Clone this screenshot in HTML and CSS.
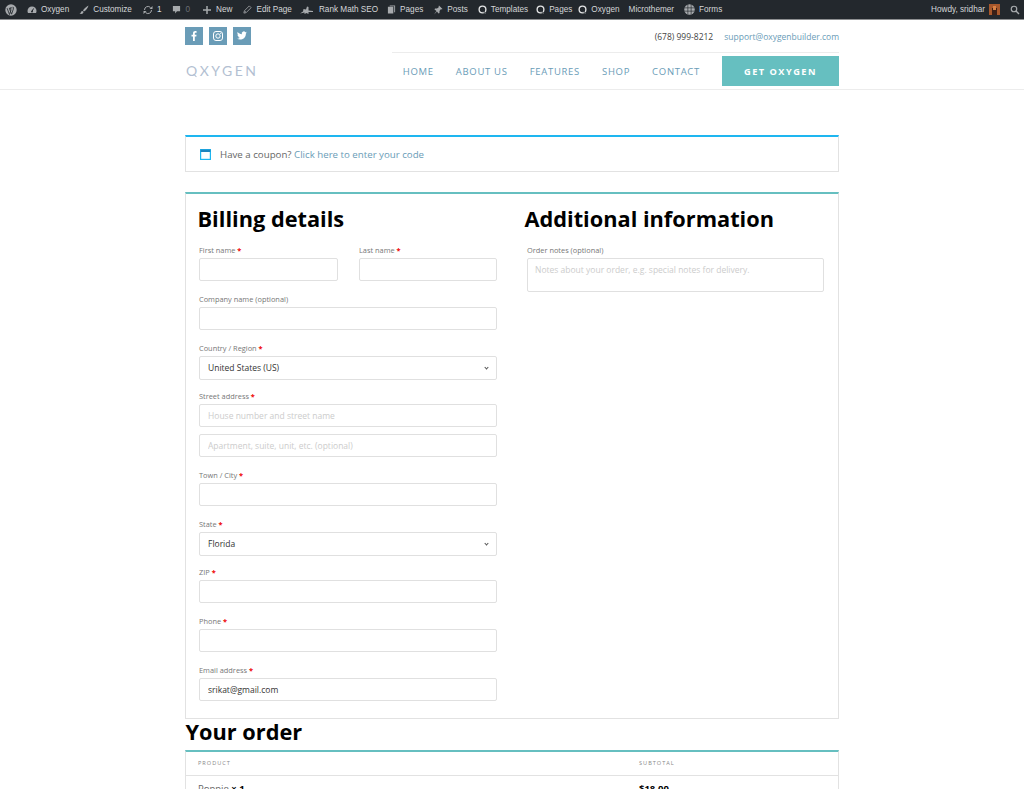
FILE: index.html
```html
<!DOCTYPE html>
<html lang="en">
  <head>
    <meta charset="UTF-8" />
    <meta name="viewport" content="width=device-width, initial-scale=1.0" />
    <title>Checkout</title>
    <link rel="stylesheet" href="styles.css">
  </head>
  <body>
    <div class="admin-bar">
      <div class="admin-left">
        <a class="admin-item">
          <svg class="wp-logo" viewBox="0 0 20 20"><circle cx="10" cy="10" r="9.5" fill="#a7aaad"/><path d="M3.5 7l4 10.5L10 10l-1-3M8 6.5h4.5M7 6.5L11 17l3-9c.8-2-.3-3-1-3" fill="none" stroke="#23282d" stroke-width="1.4"/></svg>
        </a>
        <a class="admin-item">
          <svg class="ico" viewBox="0 0 20 20"><path d="M10 3a9 9 0 0 0-9 9c0 1.500.4 3 1 4h16c.6-1 1-2.500 1-4a9 9 0 0 0-9-9z" fill="#a7aaad"/><path d="M10 13l3-6" stroke="#23282d" stroke-width="2"/><circle cx="10" cy="13" r="2" fill="#23282d"/></svg>
          Oxygen
        </a>
        <a class="admin-item m11">
          <svg class="ico" viewBox="0 0 20 20"><path d="M19 1c-4 2-9 6-11 10l2 2c4-2 8-7 9-12zM7 12c-3 0-3 3-4 4-.5.600-1.500 1-2 1 3 1.500 8 1 8-3z" fill="#a7aaad"/></svg>
          Customize
        </a>
        <a class="admin-item m11">
          <svg class="ico" viewBox="0 0 20 20"><path d="M3 10a7 7 0 0 1 12-5M17 10a7 7 0 0 1-12 5" fill="none" stroke="#a7aaad" stroke-width="2"/><path d="M13 8h6V2zM7 12H1v6z" fill="#a7aaad"/></svg>
          1
        </a>
        <a class="admin-item m12">
          <svg class="ico ico-small" viewBox="0 0 20 20"><path d="M2 2h16v12h-7l-4 5v-5H2z" fill="#a7aaad"/></svg>
          <span class="dim">0</span>
        </a>
        <a class="admin-item m11">
          <svg class="ico" viewBox="0 0 20 20"><path d="M8.500 2h3v6.500H18v3h-6.500V18h-3v-6.500H2v-3h6.500z" fill="#a7aaad"/></svg>
          New
        </a>
        <a class="admin-item m7">
          <svg class="ico ico-small" viewBox="0 0 20 20"><path d="M14 2l4 4L7 17l-5 1 1-5zM4 13.500l2.500 2.500" fill="none" stroke="#a7aaad" stroke-width="1.800"/></svg>
          Edit Page
        </a>
        <a class="admin-item rank-item m9">
          <svg class="ico ico-wide" viewBox="0 0 28 20"><path d="M1 17l6-4 1-5 5 1 2-6 3 1v7l9 1v2h-9v4l-4-2-4 2v-3z" fill="#a7aaad"/></svg>
          Rank Math SEO
        </a>
        <a class="admin-item">
          <svg class="ico ico-small" viewBox="0 0 20 20"><path d="M6 1h12v15h-2V3H6zM2 4h12v15H2z" fill="#a7aaad"/></svg>
          Pages
        </a>
        <a class="admin-item">
          <svg class="ico" viewBox="0 0 20 20"><path d="M12 1l7 7-2 1-1-1-3 4 0 4-2 1-3-4-6 6 5-7-4-3 1-2 4 0 4-3-1-1z" fill="#a7aaad"/></svg>
          Posts
        </a>
        <a class="admin-item m8">
          <svg class="ico ico-small" viewBox="0 0 20 20"><circle cx="10" cy="10" r="7.500" fill="none" stroke="#e4e5e6" stroke-width="3"/><path d="M12 13l4 6" stroke="#23282d" stroke-width="3"/><path d="M12 15l4 4" stroke="#e4e5e6" stroke-width="1.500"/></svg>
          Templates
        </a>
        <a class="admin-item m6">
          <svg class="ico ico-small" viewBox="0 0 20 20"><circle cx="10" cy="10" r="7.500" fill="none" stroke="#e4e5e6" stroke-width="3"/><path d="M12 13l4 6" stroke="#23282d" stroke-width="3"/><path d="M12 15l4 4" stroke="#e4e5e6" stroke-width="1.500"/></svg>
          Pages
        </a>
        <a class="admin-item m9">
          <svg class="ico ico-small" viewBox="0 0 20 20"><circle cx="10" cy="10" r="7.500" fill="none" stroke="#e4e5e6" stroke-width="3"/><path d="M12 13l4 6" stroke="#23282d" stroke-width="3"/><path d="M12 15l4 4" stroke="#e4e5e6" stroke-width="1.500"/></svg>
          Oxygen
        </a>
        <a class="admin-item">Microthemer</a>
        <a class="admin-item">
          <svg class="ico ico-globe" viewBox="0 0 20 20"><circle cx="10" cy="10" r="9.500" fill="#a7aaad"/><path d="M1 7h18M1 13h18M7 1v18M13 1v18" stroke="#23282d" stroke-width="1.200"/></svg>
          Forms
        </a>
      </div>
      <div class="admin-right">
        <span>Howdy, sridhar</span>
        <svg class="avatar" viewBox="0 0 11 11"><rect width="11" height="11" fill="#a8582c"/><rect x="3" y="4" width="5" height="7" fill="#3a2018"/><rect x="4" y="2" width="3" height="4" fill="#d98245"/></svg>
        <svg class="search" viewBox="0 0 20 20"><circle cx="8" cy="8" r="5.500" fill="none" stroke="#a7aaad" stroke-width="2.400"/><path d="M12 12l6 6" stroke="#a7aaad" stroke-width="3"/></svg>
      </div>
    </div>

    <header class="site-header">
      <div class="wrap">
        <div class="header-top">
          <div class="social">
            <a class="social-btn">
              <svg viewBox="0 0 18 18"><path d="M9.800 14V9.500h1.500l.2-1.800H9.800V6.600c0-.5.2-.8.900-.8h.9V4.200c-.2 0-.7-.1-1.300-.1-1.400 0-2.300.8-2.300 2.300v1.300H6.500v1.800H8V14z" fill="#fff"/></svg>
            </a>
            <a class="social-btn">
              <svg viewBox="0 0 18 18"><rect x="4.500" y="4.500" width="9" height="9" rx="2.500" fill="none" stroke="#fff" stroke-width="1"/><circle cx="9" cy="9" r="2.200" fill="none" stroke="#fff" stroke-width="1"/><circle cx="11.700" cy="6.300" r=".6" fill="#fff"/></svg>
            </a>
            <a class="social-btn">
              <svg viewBox="0 0 18 18"><path d="M14 5.700c-.4.200-.8.300-1.200.3.400-.3.800-.7.900-1.200-.4.200-.9.400-1.300.5a2 2 0 0 0-3.500 1.900C7.200 7.100 5.700 6.300 4.700 5c-.6 1-.3 2.100.6 2.700-.3 0-.6-.1-.9-.3 0 1 .7 1.800 1.600 2-.3.100-.6.100-.9 0 .3.800 1 1.400 1.900 1.400-.9.700-2 1-3 .9 2.900 1.800 8.900.9 8.900-5.300.4-.2.800-.5 1.100-.7z" fill="#fff"/></svg>
            </a>
          </div>
          <div class="contact-info">
            <span class="phone">(678) 999-8212</span>
            <a class="email">support@oxygenbuilder.com</a>
          </div>
        </div>
        <div class="header-main">
          <a class="logo"><span class="logo-o">O</span>XYGEN</a>
          <nav class="main-nav">
            <a>HOME</a>
            <a>ABOUT US</a>
            <a>FEATURES</a>
            <a>SHOP</a>
            <a>CONTACT</a>
            <a class="get-btn">GET OXYGEN</a>
          </nav>
        </div>
      </div>
    </header>

    <main class="wrap checkout">
      <div class="coupon">
        <svg class="coupon-ico" viewBox="0 0 11 11"><rect x=".6" y=".6" width="9.800" height="9.800" fill="none" stroke="#1eb6f0" stroke-width="1.200"/><rect x=".6" y=".6" width="9.800" height="2.400" fill="#1e85be"/></svg>
        <span>Have a coupon? <a>Click here to enter your code</a></span>
      </div>

      <div class="customer-box">
        <div class="col">
          <h3>Billing details</h3>
          <div class="row-two">
            <div class="field">
              <label>First name <b>*</b></label>
              <input type="text" />
            </div>
            <div class="field">
              <label>Last name <b>*</b></label>
              <input type="text" />
            </div>
          </div>
          <div class="field">
            <label>Company name (optional)</label>
            <input type="text" />
          </div>
          <div class="field field-select">
            <label>Country / Region <b>*</b></label>
            <div class="select-box">United States (US)</div>
          </div>
          <div class="field field-street">
            <label>Street address <b>*</b></label>
            <input type="text" placeholder="House number and street name" />
          </div>
          <div class="field">
            <input type="text" placeholder="Apartment, suite, unit, etc. (optional)" />
          </div>
          <div class="field">
            <label>Town / City <b>*</b></label>
            <input type="text" />
          </div>
          <div class="field field-select">
            <label>State <b>*</b></label>
            <div class="select-box">Florida</div>
          </div>
          <div class="field">
            <label>ZIP <b>*</b></label>
            <input type="text" />
          </div>
          <div class="field">
            <label>Phone <b>*</b></label>
            <input type="text" />
          </div>
          <div class="field">
            <label>Email address <b>*</b></label>
            <input type="text" value="srikat@gmail.com" />
          </div>
        </div>
        <div class="col">
          <h3>Additional information</h3>
          <div class="field">
            <label>Order notes (optional)</label>
            <textarea placeholder="Notes about your order, e.g. special notes for delivery."></textarea>
          </div>
        </div>
      </div>

      <h3 class="order-title">Your order</h3>
      <div class="order-table">
        <div class="order-row order-head">
          <span>PRODUCT</span>
          <span>SUBTOTAL</span>
        </div>
        <div class="order-row order-item">
          <span>Poppie <b>× 1</b></span>
          <b>$18.00</b>
        </div>
      </div>
    </main>
  </body>
</html>
```

FILE: styles.css
```css
html,
body {
  height: 789px;
  overflow: hidden;
}
body {
  margin: 0;
  background: #fff;
  font-family: "Open Sans", sans-serif;
  color: #404040;
}
a {
  color: inherit;
  text-decoration: none;
}

/* admin bar */
.admin-bar {
  height: 19px;
  background: #23282d;
  color: #d4d6d8;
  font-family: "Liberation Sans", sans-serif;
  font-size: 8.2px;
  display: flex;
  justify-content: space-between;
  align-items: center;
  box-shadow: 0 1px 0 #8d8f91;
  padding: 0 4px 0 5px;
}
.admin-left,
.admin-right {
  display: flex;
  align-items: center;
}
.admin-item {
  display: flex;
  align-items: center;
  gap: 4px;
  margin-right: 10px;
  white-space: nowrap;
}
.m6 {
  margin-right: 6px;
}
.m7 {
  margin-right: 7px;
}
.m8 {
  margin-right: 8px;
}
.m9 {
  margin-right: 9px;
}
.m11 {
  margin-right: 11px;
}
.m12 {
  margin-right: 12px;
}
.rank-item {
  gap: 5px;
}
.dim {
  color: #6b6f73;
}
.wp-logo {
  width: 12px;
  height: 12px;
}
.ico {
  width: 10px;
  height: 10px;
}
.ico-small {
  width: 9px;
  height: 9px;
}
.ico-wide {
  width: 15px;
  height: 10px;
}
.ico-globe {
  width: 11px;
  height: 11px;
}
.avatar {
  width: 11px;
  height: 11px;
  margin-left: 4px;
}
.search {
  width: 10px;
  height: 10px;
  margin-left: 10px;
}

/* header */
.wrap {
  width: 654px;
  margin: 0 auto;
}
.site-header {
  height: 70px;
  border-bottom: 1px solid #ececec;
}
.header-top {
  display: flex;
  justify-content: space-between;
  align-items: center;
  box-sizing: border-box;
  padding: 8px 0 7px;
  height: 33px;
}
.social {
  display: flex;
  gap: 6px;
}
.social-btn {
  width: 18px;
  height: 18px;
  background: #6a9cb7;
  display: block;
}
.social-btn svg {
  display: block;
}
.contact-info {
  font-size: 8.5px;
  display: flex;
  gap: 11px;
}
.phone {
  color: #444;
}
.email {
  color: #6a9cb7;
}
.header-main {
  display: flex;
  justify-content: space-between;
  align-items: center;
}
.logo {
  font-family: Lato, sans-serif;
  font-weight: 400;
  font-size: 14px;
  letter-spacing: 2.5px;
  color: #b3bfd2;
  margin-left: 1px;
}
.logo-o {
  position: relative;
}
.logo-o::after {
  content: "";
  position: absolute;
  right: 3px;
  bottom: 3px;
  width: 4px;
  height: 1px;
  background: #b3bfd2;
  transform: rotate(45deg);
}
.main-nav {
  width: 447px;
  height: 37px;
  border-top: 1px solid #ececec;
  box-sizing: border-box;
  display: flex;
  justify-content: flex-end;
  align-items: center;
  gap: 22px;
  font-size: 9.5px;
  letter-spacing: 0.7px;
  color: #6a9cb7;
  white-space: nowrap;
}
.get-btn {
  width: 117px;
  height: 30px;
  background: #66bfc0;
  color: #fff;
  font-weight: 700;
  font-size: 9.200px;
  letter-spacing: 1.500px;
  display: flex;
  justify-content: center;
  align-items: center;
}

/* checkout */
.checkout {
  padding-top: 45px;
}
.coupon {
  height: 37px;
  box-sizing: border-box;
  border: 1px solid #e2e2e2;
  border-top: 2px solid #1eb6f0;
  display: flex;
  align-items: center;
  gap: 9px;
  padding-left: 14px;
  font-size: 9.700px;
  color: #666;
}
.coupon a {
  color: #6a9cb7;
}
.coupon-ico {
  width: 11px;
  height: 11px;
}
.customer-box {
  margin-top: 20px;
  height: 527px;
  box-sizing: border-box;
  border: 1px solid #e2e2e2;
  border-top: 2px solid #66bfc0;
  padding: 0 14px 0 13px;
  display: grid;
  grid-template-columns: 1fr 1fr;
  column-gap: 30px;
}
h3 {
  margin: 0;
  color: #000;
  font-weight: 700;
  font-size: 21.750px;
  line-height: 30px;
}
.col h3 {
  margin: 10px 0 11px -1.500px;
}
.col + .col h3 {
  margin-left: -2.500px;
}
.row-two {
  display: grid;
  grid-template-columns: 139px 138px;
  column-gap: 21px;
}
.field {
  margin-bottom: 13px;
}
.field-select {
  margin-bottom: 11px;
}
.field-street {
  margin-bottom: 7px;
}
label {
  display: block;
  font-size: 7.400px;
  line-height: 11px;
  padding-bottom: 2px;
  color: #777;
}
label b {
  color: #e00;
  font-weight: 700;
}
input,
textarea,
.select-box {
  display: block;
  width: 100%;
  height: 23px;
  box-sizing: border-box;
  border: 1px solid #e0e0e0;
  border-radius: 2px;
  padding: 0 8px;
  background: #fff;
  font-family: "Open Sans", sans-serif;
  font-size: 8.500px;
  color: #333;
  outline: none;
}
textarea {
  height: 34px;
  padding: 5px 7px;
  resize: none;
}
input::placeholder,
textarea::placeholder {
  color: #ccc;
  opacity: 1;
}
.select-box {
  height: 24px;
  line-height: 22px;
  position: relative;
}
.select-box::after {
  content: "";
  position: absolute;
  right: 8px;
  top: 9px;
  width: 2px;
  height: 2px;
  border-right: 1px solid #555;
  border-bottom: 1px solid #555;
  transform: rotate(45deg);
}
.order-title {
  line-height: 30px;
  margin: -2px 0 0 .5px;
  padding-bottom: 3px;
}
.order-table {
  border: 1px solid #e2e2e2;
  border-top: 2px solid #66bfc0;
  height: 60px;
}
.order-row {
  display: grid;
  grid-template-columns: 441px 1fr;
  padding-left: 12px;
}
.order-head {
  height: 23px;
  line-height: 22px;
  border-bottom: 1px solid #e2e2e2;
  font-size: 5.600px;
  letter-spacing: 1px;
  color: #888;
}
.order-item {
  padding-top: 6px;
  font-size: 9.500px;
  color: #666;
}
.order-item b {
  color: #000;
}
```
